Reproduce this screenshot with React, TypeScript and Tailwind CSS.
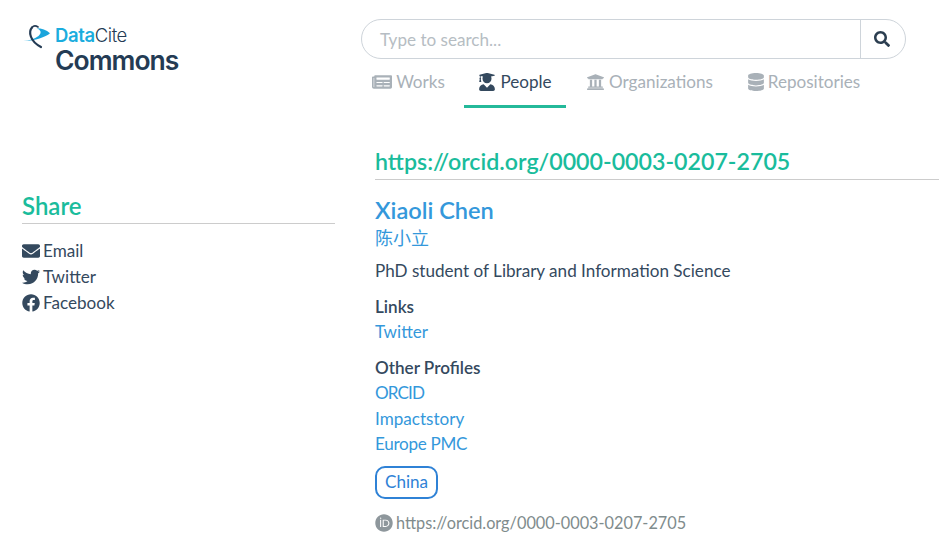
import { FaDatabase, FaEnvelope, FaFacebook, FaNewspaper, FaOrcid, FaSearch, FaTwitter, FaUniversity, FaUserGraduate } from "react-icons/fa"

function Logo() {
  return (
    <div className="flex items-start font-['Inter',sans-serif]">
      <svg width="28" height="24" viewBox="0 0 28 24" className="mt-[25px] ml-[23px] shrink-0">
        <path d="M0.3 16 C7 16 12 15 16.5 13.5 C21 12 25 10.5 27 8.3 C23.5 5 18.5 3.3 13.7 3.3 C18 5 19 8 15.5 11 C11.5 14.2 6 15.6 0.3 16 Z" fill="#1ba5dc" />
        <path d="M9 2.5 C5.5 6.5 6.5 16 18 22" fill="none" stroke="#243b54" strokeWidth="2.2" strokeLinecap="round" />
        <path d="M9 2.5 C10.5 0.6 13 0.6 15 2" fill="none" stroke="#243b54" strokeWidth="1.6" strokeLinecap="round" />
      </svg>
      <div className="mt-[24px] ml-[4px]">
        <div className="text-[18.5px] leading-[22px] tracking-[-0.4px]">
          <span className="font-semibold text-[#1badde]">Data</span>
          <span className="font-light text-[#243b54]">Cite</span>
        </div>
        <div className="text-[26.5px] leading-[28px] font-semibold tracking-[-1px] text-[#243b54]">Commons</div>
      </div>
    </div>
  )
}

function Tab({ icon, label, active, className }: { icon: React.ReactNode; label: string; active?: boolean; className: string }) {
  return (
    <div className={`flex h-[49px] items-center justify-center gap-[4px] border-b-[3px] ${active ? "border-[#24b99a] text-[#34495e]" : "border-transparent text-[#a9b1b8]"} ${className}`}>
      {icon}
      <span>{label}</span>
    </div>
  )
}

export default function App() {
  return (
    <div className="flex min-h-[548px] w-[939px] overflow-hidden bg-white font-['Lato',sans-serif] text-[17.1px] text-[#34495e]">
      {/* colonne gauche */}
      <div className="w-[361px] shrink-0">
        <Logo />
        <div className="ml-[22px] mt-[118px] w-[313px]">
          <h3 className="border-b border-[#ccc] pb-[3px] text-[24px] leading-[28px] font-semibold text-[#1abc9c]">Share</h3>
          <div className="mt-[14px] flex flex-col leading-[26px]">
            <div className="flex items-center gap-[3px]"><FaEnvelope className="h-[18px] w-[18px]" />Email</div>
            <div className="flex items-center gap-[3px]"><FaTwitter className="h-[18px] w-[18px]" />Twitter</div>
            <div className="flex items-center gap-[3px]"><FaFacebook className="h-[18px] w-[18px]" />Facebook</div>
          </div>
        </div>
      </div>

      {/* colonne droite */}
      <div className="min-w-0 flex-1">
        <div className="mt-[19px] flex h-[40px] w-[545px] rounded-full border border-[#ced4da]">
          <div className="flex flex-1 items-center pt-[2px] pl-[18px] text-[#b6bdc3]">Type to search...</div>
          <div className="flex w-[45px] items-center justify-center border-l border-[#ced4da] pr-[2px]">
            <FaSearch className="h-[16px] w-[16px] text-[#2c3e50]" />
          </div>
        </div>
        <div className="flex">
          <Tab className="w-[95px]" icon={<FaNewspaper className="h-[18px] w-[20px]" />} label="Works" />
          <Tab className="ml-[8px] w-[102px]" active icon={<FaUserGraduate className="h-[18px] w-[18px]" />} label="People" />
          <Tab className="w-[167px]" icon={<FaUniversity className="h-[18px] w-[19px]" />} label="Organizations" />
          <Tab className="w-[142px]" icon={<FaDatabase className="h-[18px] w-[16px]" />} label="Repositories" />
        </div>

        <div className="ml-[14px] mt-[39px]">
          <h3 className="border-b border-[#ccc] pb-[4px] text-[23.2px] leading-[28px] font-semibold whitespace-nowrap text-[#1abc9c]">https://orcid.org/0000-0003-0207-2705</h3>
          <div className="mt-[16px] text-[23.6px] leading-[28px] font-semibold text-[#3498db]">Xiaoli Chen</div>
          <div className="font-['Noto_Sans_CJK_SC',sans-serif] text-[18px] leading-[26px] text-[#3498db]">陈小立</div>
          <div className="mt-[8px] leading-[26px]">PhD student of Library and Information Science</div>
          <div className="mt-[10px] leading-[26px] font-semibold">Links</div>
          <div className="leading-[24px] text-[#3498db]">Twitter</div>
          <div className="mt-[11px] leading-[25px] font-semibold">Other Profiles</div>
          <div className="flex flex-col leading-[25.5px] text-[#3498db]">
            <span className="tracking-[-0.9px]">ORCID</span>
            <span>Impactstory</span>
            <span className="tracking-[-0.3px]">Europe PMC</span>
          </div>
          <div className="mt-[9px] flex">
            <span className="flex h-[33px] items-center rounded-[10px] border-2 border-[#2f82d6] px-[8px] text-[#2f82d6]">China</span>
          </div>
          <div className="mt-[11px] flex items-center gap-[3px] text-[16.3px] leading-[26px] text-[#7f8c8d]">
            <FaOrcid className="h-[18px] w-[18px] text-[#8e979c]" />
            https://orcid.org/0000-0003-0207-2705
          </div>
        </div>
      </div>
    </div>
  )
}
